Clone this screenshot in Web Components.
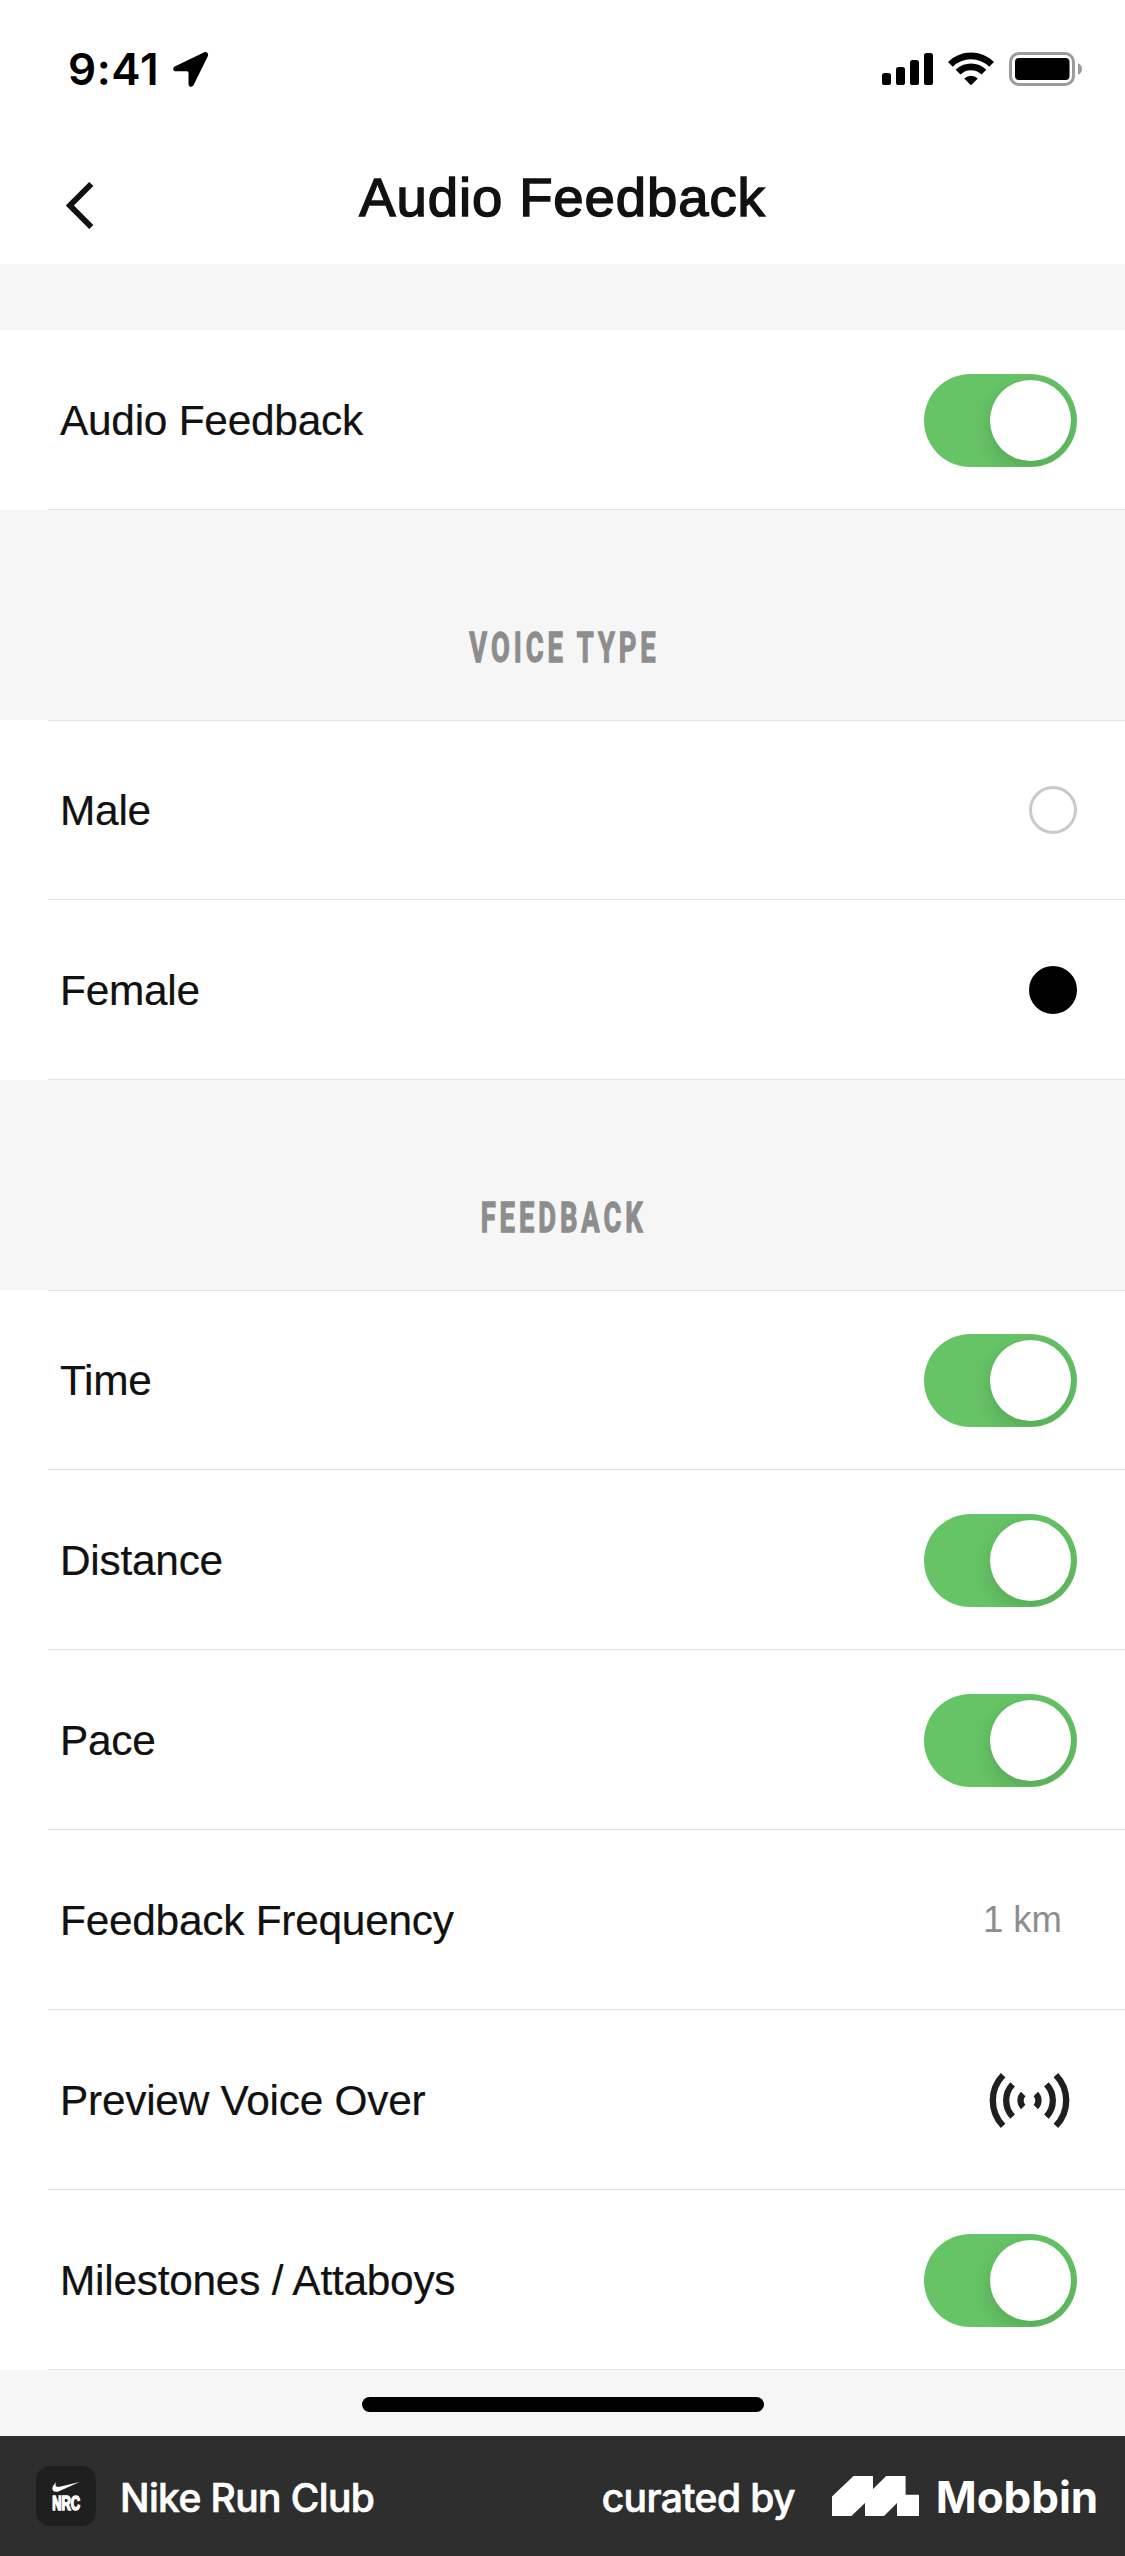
<!DOCTYPE html>
<html lang="en">
<head>
<meta charset="utf-8">
<title>Audio Feedback</title>
<style>
  html, body { margin: 0; padding: 0; }
  body { width: 1125px; height: 2556px; overflow: hidden; background: #f6f6f6; font-family: "Liberation Sans", Arial, sans-serif; color: #111; }
</style>
</head>
<body>
<app-screen>
  <status-bar time="9:41"></status-bar>
  <nav-bar>Audio Feedback</nav-bar>
  <list-group plain>
    <setting-row>Audio Feedback<toggle-switch slot="control"></toggle-switch></setting-row>
  </list-group>
  <section-header>VOICE TYPE</section-header>
  <list-group>
    <setting-row>Male<radio-dot slot="control"></radio-dot></setting-row>
    <setting-row>Female<radio-dot slot="control" checked></radio-dot></setting-row>
  </list-group>
  <section-header>FEEDBACK</section-header>
  <list-group>
    <setting-row>Time<toggle-switch slot="control"></toggle-switch></setting-row>
    <setting-row>Distance<toggle-switch slot="control"></toggle-switch></setting-row>
    <setting-row>Pace<toggle-switch slot="control"></toggle-switch></setting-row>
    <setting-row>Feedback Frequency<value-text slot="control">1 km</value-text></setting-row>
    <setting-row>Preview Voice Over<sound-icon slot="control"></sound-icon></setting-row>
    <setting-row>Milestones / Attaboys<toggle-switch slot="control"></toggle-switch></setting-row>
  </list-group>
  <home-indicator></home-indicator>
  <credit-bar>
    <span slot="app">Nike Run Club</span>
    <span slot="by">curated by</span>
    <span slot="brand">Mobbin</span>
  </credit-bar>
</app-screen>

<script>
  function define(name, html) {
    const template = document.createElement('template');
    template.innerHTML = html;
    customElements.define(name, class extends HTMLElement {
      constructor() {
        super();
        this.attachShadow({ mode: 'open' }).appendChild(template.content.cloneNode(true));
      }
      connectedCallback() {
        const time = this.shadowRoot.querySelector('.time');
        if (time) time.textContent = this.getAttribute('time');
      }
    });
  }

  define('app-screen', `
    <style>
      :host { display: flex; flex-direction: column; width: 1125px; height: 2556px; background: #f6f6f6; }
    </style>
    <slot></slot>`);

  define('status-bar', `
    <style>
      :host { display: flex; justify-content: space-between; height: 138px; background: #fff; box-sizing: border-box; padding: 52px 43px 0 68px; color: #000; }
      .left, .right { display: flex; align-items: flex-start; height: 35px; }
      .time { font: 600 44px/35px Inter, sans-serif; letter-spacing: 0.6px; width: 105px; white-space: nowrap; }
      svg { display: block; }
      .wifi { margin: 0 15px; }
    </style>
    <div class="left">
      <span class="time"></span>
      <svg width="36" height="35" viewBox="0 0 36 35"><path d="M2.2 14.3 30.8.4C33.6-.9 36 1.4 34.8 4.2L20.6 33C19.2 35.8 15.5 35 15.5 31.9V20.9Q15.5 19.3 13.9 19.3H3.2C-.2 19.3-.9 15.7 2.2 14.3Z"/></svg>
    </div>
    <div class="right">
      <svg width="51" height="34" viewBox="0 0 51 34"><rect y="21" width="9" height="12" rx="2.6"/><rect x="14" y="15" width="9" height="18" rx="2.6"/><rect x="28" y="8" width="9" height="25" rx="2.6"/><rect x="42" y="1" width="9" height="32" rx="2.6"/></svg>
      <svg class="wifi" width="46" height="34" viewBox="0 0 46 34"><g fill="none" stroke="#000" stroke-width="6.8"><path d="M2.4 12.4A29 29 0 0 1 43.6 12.4"/><path d="M10.1 20.2A18.4 18.4 0 0 1 35.9 20.2"/></g><path d="M16.2 26.4A10.4 10.4 0 0 1 29.8 26.4L23.6 32.8Q23 33.4 22.4 32.8Z"/></svg>
      <svg width="73" height="34" viewBox="0 0 73 34"><rect x="1.5" y="1.5" width="63" height="31" rx="8.5" fill="none" stroke="#9b9b9b" stroke-width="3"/><rect x="6" y="6" width="54.5" height="22" rx="4"/><path d="M69 11.2Q73 12.8 73 17T69 22.8Z" fill="#9b9b9b"/></svg>
    </div>`);

  define('nav-bar', `
    <style>
      :host { display: grid; grid-template-columns: 160px 1fr 160px; height: 126px; background: #fff; }
      svg { display: block; margin: 44px 0 0 66px; }
      .title { text-align: center; font-size: 54.5px; line-height: 120px; letter-spacing: 0.9px; -webkit-text-stroke: 1.5px #111; white-space: nowrap; }
    </style>
    <svg width="28" height="47" viewBox="0 0 28 47"><path d="M25.3 2 3.9 23.5 25.3 45" fill="none" stroke="#111" stroke-width="5.8"/></svg>
    <div class="title"><slot></slot></div>
    <div></div>`);

  define('list-group', `
    <style>
      :host { display: block; background: linear-gradient(#e2e2e2, #e2e2e2) 48px 0 / 100% 1px no-repeat #fff; }
      :host([plain]) { background: #fff; margin-top: 66px; }
    </style>
    <slot></slot>`);

  define('setting-row', `
    <style>
      :host { display: flex; justify-content: space-between; align-items: center; height: 180px; box-sizing: border-box; padding: 0 48px 0 60px; background: linear-gradient(#e2e2e2, #e2e2e2) 48px 179px / 100% 1px no-repeat; }
      .label { font-size: 42.4px; line-height: 60px; padding-top: 2px; letter-spacing: -0.25px; -webkit-text-stroke: 0.2px #111; white-space: nowrap; }
    </style>
    <span class="label"><slot></slot></span>
    <slot name="control"></slot>`);

  define('section-header', `
    <style>
      :host { display: flex; justify-content: center; height: 210px; }
      .text { font: 700 42px/60px Roboto, sans-serif; letter-spacing: 6.1px; margin-right: -3px; padding-top: 108px; color: #8d8d8d; -webkit-text-stroke: 1.3px #8d8d8d; transform: scaleX(.65); white-space: nowrap; }
    </style>
    <div class="text"><slot></slot></div>`);

  define('toggle-switch', `
    <style>
      :host { display: flex; justify-content: flex-end; align-items: center; width: 153px; height: 93px; margin-top: 1px; border-radius: 46.5px; background: #66c466; overflow: hidden; }
      i { width: 81px; height: 81px; margin-right: 6px; border-radius: 50%; background: #fff; box-shadow: 0 8px 22px rgba(0,0,0,.15); }
    </style><i></i>`);

  define('radio-dot', `
    <style>
      :host { display: block; box-sizing: border-box; width: 48px; height: 48px; border-radius: 50%; border: 3px solid #cacaca; }
      :host([checked]) { background: #000; border-color: #000; }
    </style>`);

  define('value-text', `
    <style>
      :host { display: block; font-size: 36.5px; line-height: 60px; letter-spacing: 0; color: #8d8d8d; margin-right: 15px; white-space: nowrap; }
    </style><slot></slot>`);

  define('sound-icon', `
    <style>
      :host { display: block; margin-right: 7px; }
      svg { display: block; }
    </style>
    <svg width="81" height="60" viewBox="-40.5 -30.5 81 60"><g fill="none" stroke="#1f1f1f" stroke-width="6.3"><path d="M26.4-25.4A36.5 36.5 0 0 1 26.4 25.4M-26.4-25.4A36.5 36.5 0 0 0-26.4 25.4"/><path d="M16.9-16.1A23.4 23.4 0 0 1 16.9 16.1M-16.9-16.1A23.4 23.4 0 0 0-16.9 16.1"/><path d="M6.3-6.4A9 9 0 0 1 6.3 6.4M-6.3-6.4A9 9 0 0 0-6.3 6.4"/></g></svg>`);

  define('home-indicator', `
    <style>
      :host { display: flex; justify-content: center; height: 66px; }
      i { width: 402px; height: 15px; margin-top: 27px; border-radius: 7.5px; background: #000; }
    </style><i></i>`);

  define('credit-bar', `
    <style>
      :host { display: flex; align-items: center; height: 120px; box-sizing: border-box; padding: 0 27px 0 36px; background: #2e2e2e; color: #fff; font-family: Inter, sans-serif; white-space: nowrap; }
      .tile { display: flex; flex-direction: column; align-items: center; width: 60px; height: 60px; border-radius: 14px; background: #1f1f1f; }
      .tile svg { display: block; margin-top: 15px; }
      .nrc { font: 700 19.5px/20px "Liberation Sans", sans-serif; -webkit-text-stroke: 1.6px #fff; transform: scaleX(.66); margin-top: 1px; }
      .app, .by { font-size: 39px; font-weight: 500; line-height: 60px; padding-top: 3px; -webkit-text-stroke: .7px #fff; }
      .app { margin-left: 24px; letter-spacing: -0.6px; flex: 1; }
      .by { margin-right: 37px; letter-spacing: -0.6px; }
      .logo { display: block; }
      .brand { font-size: 44px; font-weight: 700; line-height: 60px; padding-top: 2px; margin-left: 17px; letter-spacing: -0.1px; }
    </style>
    <div class="tile">
      <svg width="28" height="11" viewBox="0 0 28 11"><path d="M27.5 1 7.5 9.9C3.5 11.6.5 10.6.4 7.7.3 5.6 1.8 3.2 4.2.9 2.6 4.2 3.6 6.5 7.8 5.8Z" fill="#fff"/></svg>
      <span class="nrc">NRC</span>
    </div>
    <span class="app"><slot name="app"></slot></span>
    <span class="by"><slot name="by"></slot></span>
    <svg class="logo" width="87" height="40" viewBox="0 0 87 40"><path d="M0 20.5 21.5 0H41V13L54.2 0H73.6V18.7H87V40H65V27L52 40H33V27L19.4 40H0Z" fill="#fff"/></svg>
    <span class="brand"><slot name="brand"></slot></span>`);
</script>
</body>
</html>
